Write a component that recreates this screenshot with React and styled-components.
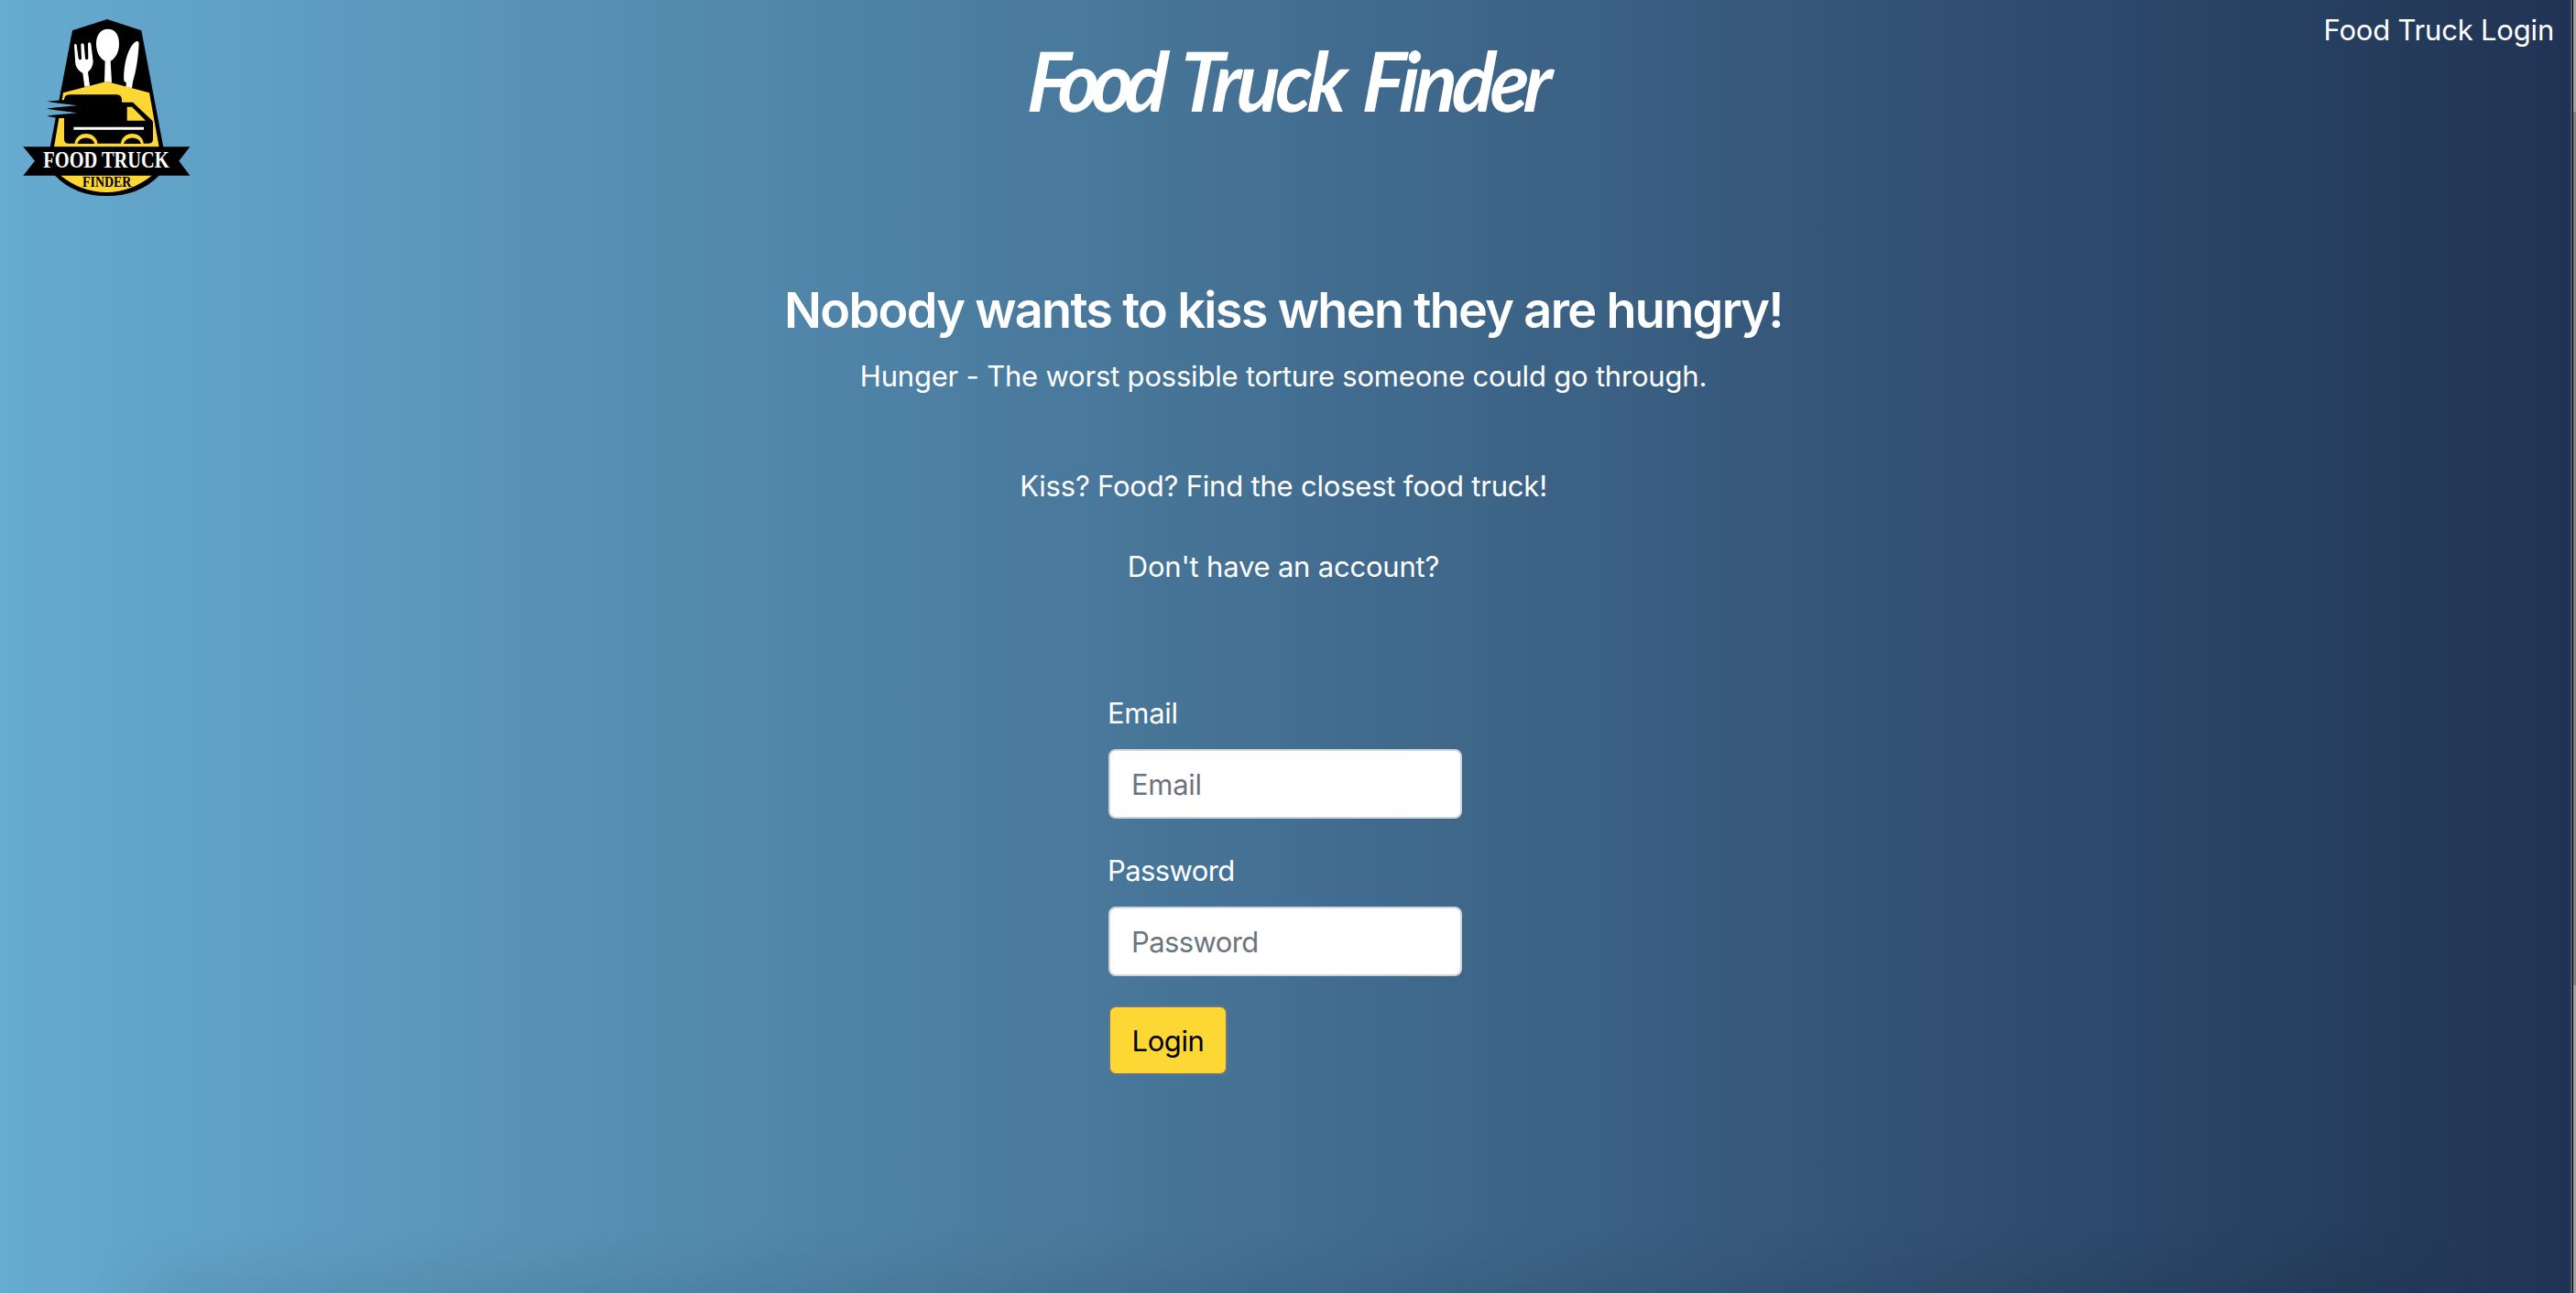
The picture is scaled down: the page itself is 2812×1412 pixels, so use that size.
import React from "react";
import styled, { createGlobalStyle } from "styled-components";

const Global = createGlobalStyle`
  * { box-sizing: border-box; }
  html, body { margin: 0; padding: 0; height: 100%; }
  body {
    overflow: hidden; background: #203354; color: #fff;
    font: 440 31px/48px Inter, "Liberation Sans", sans-serif;
    letter-spacing: -0.2px;
  }
`;
const Window = styled.div`
  display: flex; height: 1412px; overflow: hidden;
`;
const Page = styled.div`
  flex: 1; position: relative; overflow: hidden;
  background: linear-gradient(to right, #66abd0, #203354);
  &::after {
    content: ""; position: absolute; left: 160px; right: 160px; bottom: -40px; height: 40px;
    box-shadow: 0 0 70px 8px rgba(0, 0, 0, 0.11);
  }
`;
const Edge = styled.div`
  width: 3px; background: #4f5d75; border-right: 1px solid #000;
`;
const Track = styled.div`
  width: 3px; background: #a8a29f; padding-top: 122px;
`;
const Thumb = styled.div`
  height: 954px; background: #86817e;
`;
const Header = styled.header`
  display: grid; grid-template-columns: 1fr auto 1fr; height: 296px; align-items: start;
`;
const LogoSlot = styled.div`
  padding: 10px 0 0 10px; line-height: 0; letter-spacing: 0;
`;
const Title = styled.h1`
  margin: 0; padding-top: 36px; display: flex; gap: 21px;
  font: italic 700 86px/100px Lato, "Open Sans", sans-serif;
  transform: translateX(5px) skewX(-4deg) scaleY(1.05);
`;
const Word = styled.span`
  letter-spacing: ${(p) => p.$track}px;
`;
const NavLink = styled.a`
  justify-self: end; padding: 9px 18px 0 0; color: #fff; text-decoration: none;
`;
const Main = styled.main`
  display: flex; flex-direction: column; align-items: center; padding-right: 4px;
`;
const Heading = styled.h3`
  margin: 9px 0 14px; font-size: 54px; line-height: 68px; font-weight: 600; letter-spacing: -1.68px;
`;
const Line = styled.p`
  margin: 0 0 ${(p) => p.$after}px;
`;
const Form = styled.form`
  display: flex; flex-direction: column; align-items: flex-start; width: 386px; margin-left: 4px;
`;
const Label = styled.label`
  margin: 1px 0 15px -1px; letter-spacing: ${(p) => p.$track || -0.3}px;
`;
const Input = styled.input`
  width: 100%; height: 76px; margin: 0 0 32px; padding: 1px 23px 0;
  border: 2px solid #ced4da; border-radius: 8px; background: #fff; color: #495057;
  font: inherit; letter-spacing: ${(p) => p.$track || -0.3}px; outline: 0;
  &::placeholder { color: #6c757d; opacity: 1; }
`;
const Submit = styled.button`
  width: 130px; height: 76px; padding: 2px 0 0; border: 2px solid #6c757d; border-radius: 8px;
  background: #fdd835; color: #000; font: inherit; letter-spacing: -0.4px;
`;

function Logo() {
  return (
    <svg width="220" height="210" viewBox="0 0 660 630">
      <path d="M207 70L321 33L433 70L505 452L491 545Q425 612 319 612Q215 612 150 545L134 452Z" fill="#000" />
      <path d="M177 274L319 237L459 274L491 452H147Z" fill="#fdd835" />
      <path d="M167 544H469Q400 600 319 600Q235 600 167 544Z" fill="#fdd835" />
      <g fill="#fff">
        <path d="M213 118Q216 110 221 117L227 161Q232 171 237 162L235 116Q240 108 245 116L249 161Q254 170 259 161L258 113Q263 105 268 113L275 172Q273 195 258 206L264 251L247 255L241 210Q221 198 217 180Z" />
        <path d="M323 65C350 65 360 87 360 113C360 142 347 162 332 170L336 241L319 237L312 240L314 170C298 162 285 142 285 113C285 87 298 65 323 65Z" />
        <path d="M415 106Q424 103 425 112C423 156 416 204 405 238L402 259L382 254L384 242L376 235C374 192 385 127 415 106Z" />
      </g>
      <path d="M180 298Q180 280 198 280H352Q369 280 369 298V305H405L469 365Q471 369 471 377V426Q471 440 457 440H195Q180 440 180 425Z" fill="#000" />
      <path d="M123 302L184 297L230 316V340L184 357L160 357L123 350L150 344V332L123 326L150 320V308Z" fill="#000" />
      <path d="M123 303L223 316L123 325ZM123 327L223 340L123 349Z" fill="#64a8cd" />
      <path d="M386 320H402L447 365H386Z" fill="#fdd835" />
      <path d="M211 391H441" stroke="#fff" strokeWidth="9" />
      <path d="M215 441A37 33 0 0 1 289 441ZM366 441A37 33 0 0 1 440 441Z" fill="#fdd835" />
      <path d="M223 441A29 24 0 0 1 280 441ZM375 441A29 24 0 0 1 432 441Z" fill="#000" />
      <path d="M46 451H592L556 497L592 545H46L84 497Z" fill="#000" />
      <text x="112" y="519" textLength="412" lengthAdjust="spacingAndGlyphs" fontFamily="Liberation Serif, serif" fontWeight="700" fontSize="74" fill="#fff">FOOD TRUCK</text>
      <text x="240" y="581" textLength="160" lengthAdjust="spacingAndGlyphs" fontFamily="Liberation Serif, serif" fontWeight="700" fontSize="53" fill="#000">FINDER</text>
    </svg>
  );
}

export default function App() {
  return (
    <Window>
      <Global />
      <Page>
        <Header>
          <LogoSlot><Logo /></LogoSlot>
          <Title>
            <Word $track={-8.5}>Food</Word>
            <Word $track={-4}>Truck</Word>
            <Word $track={-5}>Finder</Word>
          </Title>
          <NavLink>Food Truck Login</NavLink>
        </Header>
        <Main>
          <Heading>Nobody wants to kiss when they are hungry!</Heading>
          <Line $after={72}>Hunger - The worst possible torture someone could go through.</Line>
          <Line $after={40}>Kiss? Food? Find the closest food truck!</Line>
          <Line $after={111}>Don't have an account?</Line>
          <Form>
            <Label>Email</Label>
            <Input placeholder="Email" />
            <Label $track={-0.6}>Password</Label>
            <Input placeholder="Password" type="password" $track={-0.6} />
            <Submit type="button">Login</Submit>
          </Form>
        </Main>
      </Page>
      <Edge />
      <Track><Thumb /></Track>
    </Window>
  );
}
